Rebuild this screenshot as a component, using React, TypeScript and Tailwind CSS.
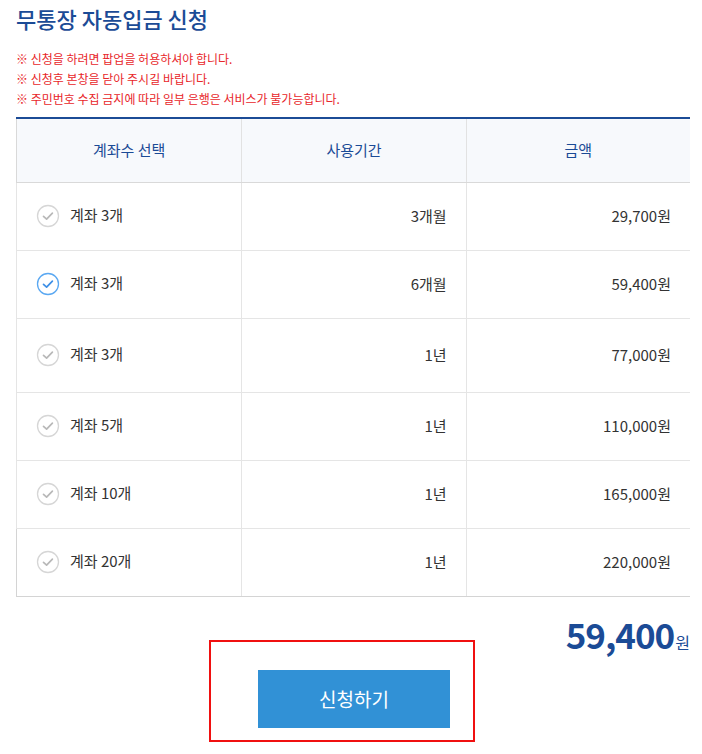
import React, { useState } from "react";

const plans = [
  { label: "계좌 3개", period: "3개월", price: 29700, h: "h-[68px]" },
  { label: "계좌 3개", period: "6개월", price: 59400, h: "h-[68px]" },
  { label: "계좌 3개", period: "1년", price: 77000, h: "h-[74px]" },
  { label: "계좌 5개", period: "1년", price: 110000, h: "h-[68px]" },
  { label: "계좌 10개", period: "1년", price: 165000, h: "h-[68px]" },
  { label: "계좌 20개", period: "1년", price: 220000, h: "h-[68px]" },
];

const CheckCircle = ({ on }: { on: boolean }) => (
  <svg width="24" height="24" viewBox="0 0 24 24" className="shrink-0">
    <circle
      cx="12"
      cy="12"
      r="10.5"
      fill="white"
      stroke={on ? "#5aa8f2" : "#d6d6d6"}
      strokeWidth="1.3"
    />
    <path
      d="M7.5 12.3 L10.6 15.2 L16.4 9.2"
      fill="none"
      stroke={on ? "#3d8fe6" : "#b8b8b8"}
      strokeWidth="1.7"
      strokeLinecap="round"
      strokeLinejoin="round"
    />
  </svg>
);

const App = () => {
  const [selected, setSelected] = useState(1);
  const won = (n: number) => n.toLocaleString("en-US");

  return (
    <main className="min-h-[754px] bg-white font-['Noto_Sans_CJK_KR','Noto_Sans',sans-serif] text-[#333]">
      <div className="relative ml-4 w-[674px]">
        <h1 className="pt-[1px] text-[22px] font-medium leading-[34px] text-[#1b4b96]">
          무통장 자동입금 신청
        </h1>

        <ul className="mt-[14px] text-[12px] leading-[20px] text-[#e8262a]">
          <li>※ 신청을 하려면 팝업을 허용하셔야 합니다.</li>
          <li>※ 신청후 본창을 닫아 주시길 바랍니다.</li>
          <li>※ 주민번호 수집 금지에 따라 일부 은행은 서비스가 불가능합니다.</li>
        </ul>

        {/* Plan table */}
        <div className="mt-[8px] border-t-2 border-[#1b4b96]">
          <div className="grid h-[64px] grid-cols-3 border-b border-l border-[#d9d9d9] bg-[#f7f9fc] text-[15px] text-[#1b4b96]">
            <div className="flex items-center justify-center">계좌수 선택</div>
            <div className="flex items-center justify-center border-l border-[#e2e2e2]">
              사용기간
            </div>
            <div className="flex items-center justify-center border-l border-[#e2e2e2]">
              금액
            </div>
          </div>

          {plans.map((p, i) => (
            <div
              key={i}
              onClick={() => setSelected(i)}
              className={`grid ${p.h} cursor-pointer grid-cols-3 border-b border-l ${
                i === plans.length - 1 ? "border-[#d4d4d4]" : "border-[#e5e5e5]"
              } text-[15px]`}
            >
              <div className="flex items-center gap-[10px] pl-[19px] pb-[2px]">
                <CheckCircle on={selected === i} />
                <span>{p.label}</span>
              </div>
              <div className="flex items-center justify-end border-l border-[#e5e5e5] pr-[19px]">
                {p.period}
              </div>
              <div className="flex items-center justify-end border-l border-[#e5e5e5] pr-[19px]">
                {won(p.price)}원
              </div>
            </div>
          ))}
        </div>

        {/* Total */}
        <div className="mt-[17px] flex items-baseline justify-end text-[#1b4b96]">
          <span className="text-[35px] font-bold leading-[40px] tracking-[-1px]">
            {won(plans[selected].price)}
          </span>
          <span className="ml-[1px] text-[16px]">원</span>
        </div>

        <div className="mt-[16px] flex justify-center">
          <button className="ml-[2px] h-[58px] w-[192px] bg-[#3191d6] text-[19px] text-white">
            신청하기
          </button>
        </div>

        {/* annotation box */}
        <div className="pointer-events-none absolute left-[193px] top-[640px] h-[102px] w-[266px] border-2 border-[#f01010]" />
      </div>
    </main>
  );
};

export default App;
